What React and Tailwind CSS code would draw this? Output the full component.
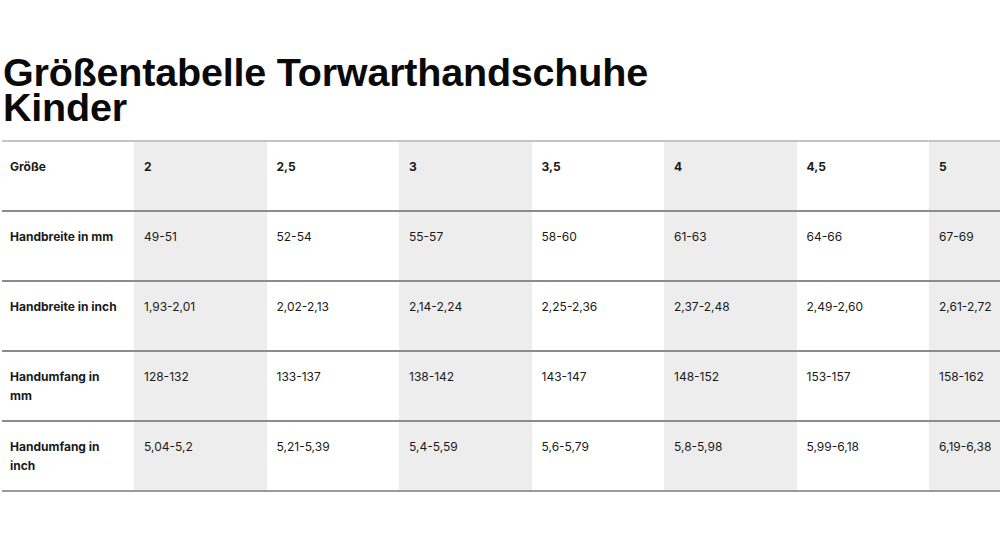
import React from 'react'

const sizes = ['2', '2,5', '3', '3,5', '4', '4,5', '5', '5,5']

const rows = [
  { label: 'Handbreite in mm', values: ['49-51', '52-54', '55-57', '58-60', '61-63', '64-66', '67-69', '70-72'] },
  { label: 'Handbreite in inch', values: ['1,93-2,01', '2,02-2,13', '2,14-2,24', '2,25-2,36', '2,37-2,48', '2,49-2,60', '2,61-2,72', '2,73-2,83'] },
  { label: <>Handumfang in<br />mm</>, values: ['128-132', '133-137', '138-142', '143-147', '148-152', '153-157', '158-162', '163-167'] },
  { label: <>Handumfang in<br />inch</>, values: ['5,04-5,2', '5,21-5,39', '5,4-5,59', '5,6-5,79', '5,8-5,98', '5,99-6,18', '6,19-6,38', '6,39-6,57'] },
]

function Cell({ i, bold, children }){
  // every other size column is shaded
  const shade = i % 2 === 0 ? 'bg-[#ededed]' : 'bg-white'
  return (
    <td className={`${shade} h-[70px] align-top pl-[10px] pt-[15px] text-[12px] leading-[19px] text-[#1a1a1a] whitespace-nowrap ${bold ? 'font-bold' : 'font-normal'}`}>
      {children}
    </td>
  )
}

export default function App(){
  return (
    <div className="w-[1000px] h-[548px] bg-white overflow-hidden" style={{ fontFamily: 'Inter, "Liberation Sans", sans-serif' }}>
      <h1 className="pl-[3px] pt-[55px] text-[39.5px] leading-[35px] font-bold tracking-[-0.2px] text-[#0a0a0a]" style={{ fontFamily: '"Liberation Sans", Arial, sans-serif' }}>
        Größentabelle Torwarthandschuhe<br />Kinder
      </h1>
      <div className="mt-[15px] ml-[2px]">
        <table className="table-fixed border-collapse w-[1192px]">
          <colgroup>
            <col className="w-[132px]" />
            {sizes.map(s => <col key={s} className="w-[132.5px]" />)}
          </colgroup>
          <tbody>
            <tr className="border-t-2 border-b-2 border-t-[#c4c4c4] border-b-[#8c8c8c]">
              <td className="h-[70px] align-top pl-[8px] pt-[15px] text-[12px] leading-[19px] font-bold text-[#1a1a1a]">Größe</td>
              {sizes.map((s, i) => <Cell key={s} i={i} bold>{s}</Cell>)}
            </tr>
            {rows.map((r, ri) => (
              <tr key={ri} className={`border-b-2 ${ri === rows.length - 1 ? 'border-b-[#9a9a9a]' : 'border-b-[#8c8c8c]'}`}>
                <td className="h-[70px] align-top pl-[8px] pt-[15px] text-[12px] leading-[19px] font-bold text-[#1a1a1a]">{r.label}</td>
                {r.values.map((v, i) => <Cell key={i} i={i}>{v}</Cell>)}
              </tr>
            ))}
          </tbody>
        </table>
      </div>
    </div>
  )
}
